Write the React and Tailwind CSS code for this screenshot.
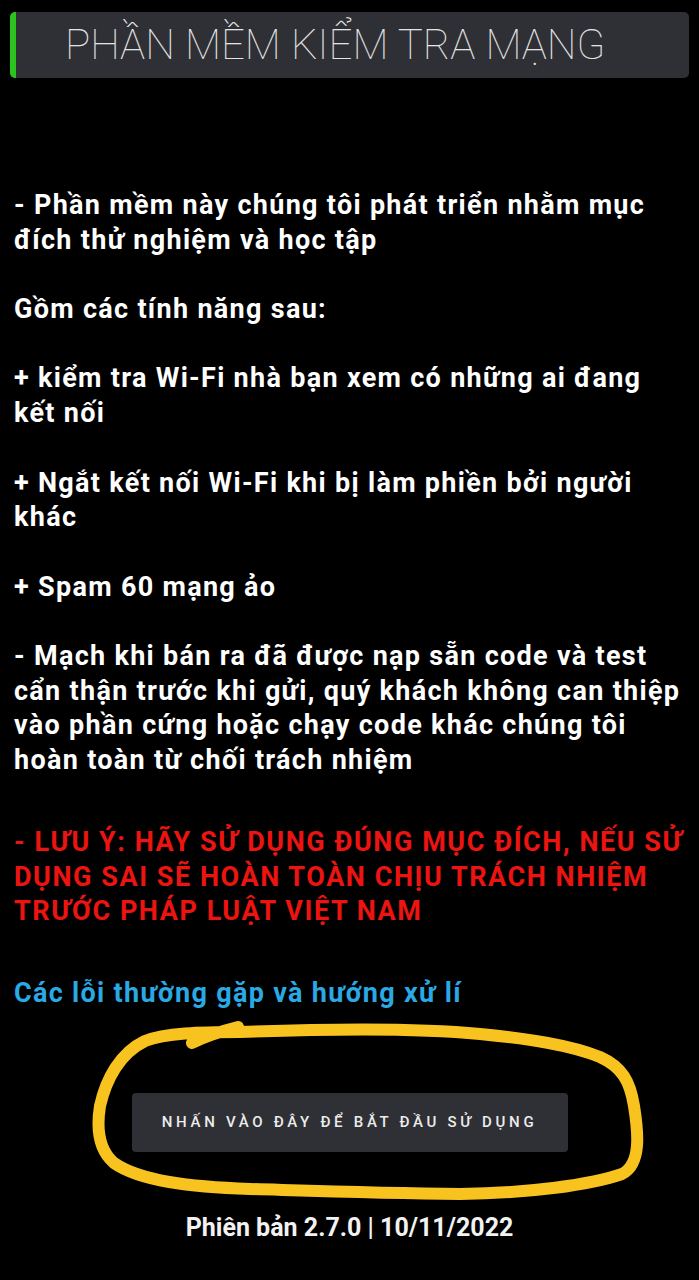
import React from 'react';

const lines = [
  ['- Phần mềm này chúng tôi phát triển nhằm mục', 'đích thử nghiệm và học tập'],
  ['Gồm các tính năng sau:'],
  ['+ kiểm tra Wi-Fi nhà bạn xem có những ai đang', 'kết nối'],
  ['+ Ngắt kết nối Wi-Fi khi bị làm phiền bởi người', 'khác'],
  ['+ Spam 60 mạng ảo'],
  [
    '- Mạch khi bán ra đã được nạp sẵn code và test',
    'cẩn thận trước khi gửi, quý khách không can thiệp',
    'vào phần cứng hoặc chạy code khác chúng tôi',
    'hoàn toàn từ chối trách nhiệm',
  ],
];

const warning = [
  '- LƯU Ý: HÃY SỬ DỤNG ĐÚNG MỤC ĐÍCH, NẾU SỬ',
  'DỤNG SAI SẼ HOÀN TOÀN CHỊU TRÁCH NHIỆM',
  'TRƯỚC PHÁP LUẬT VIỆT NAM',
];

// vòng tròn vẽ tay màu vàng quanh nút
const Scribble = () => (
  <svg
    className="absolute left-0 top-0 pointer-events-none"
    width="699"
    height="200"
    viewBox="0 1010 699 200"
    fill="none"
  >
    <path
      d="M238 1026 C222 1030 204 1036 192 1042
         M240 1031 C200 1031 165 1032 145 1040
         C120 1052 106 1078 100 1105
         C96 1130 100 1150 114 1162
         C140 1180 190 1186 250 1188
         C320 1190 380 1192 460 1193
         C530 1192 590 1184 622 1173
         C642 1163 638 1130 634 1105
         C630 1080 622 1066 600 1056
         C570 1044 530 1038 480 1033
         C420 1027 320 1028 240 1031"
      stroke="#f9c31f"
      strokeWidth="12"
      strokeLinecap="round"
      strokeLinejoin="round"
    />
  </svg>
);

export default function App() {
  return (
    <div
      className="min-h-[1280px] w-full bg-black text-white"
      style={{ fontFamily: 'Roboto, "Noto Sans", sans-serif' }}
    >
      {/* Header */}
      <div className="pt-[12px] px-[10px]">
        <div className="h-[66px] flex items-center bg-[#2f3035] rounded-[5px] border-l-[6px] border-[#2bc41f] pl-[49px]">
          <h1 className="text-[42px] font-thin text-[#e4e4e4] leading-none">
            PHẦN MỀM KIỂM TRA MẠNG
          </h1>
        </div>
      </div>

      {/* Nội dung */}
      <div className="px-[14px] pt-[110px] text-[27px] font-bold leading-[34.7px] tracking-[1.3px]">
        <div className="flex flex-col gap-[34.7px]">
          {lines.map((p, i) => (
            <p key={i}>
              {p.map((l, j) => (
                <span key={j} className="block whitespace-nowrap">{l}</span>
              ))}
            </p>
          ))}
        </div>

        <p className="mt-[47px] text-[#ec1410] tracking-[1.55px]">
          {warning.map((l, j) => (
            <span key={j} className="block whitespace-nowrap">{l}</span>
          ))}
        </p>

        <p className="mt-[47px] text-[#2aa9e4]">
          Các lỗi thường gặp và hướng xử lí
        </p>
      </div>

      {/* Nút */}
      <div className="relative h-[200px] pt-[82px] flex justify-center">
        <Scribble />
        <button className="w-[436px] h-[59px] bg-[#2f3035] rounded-[4px] text-[15px] font-medium tracking-[3.7px] text-[#ececec]">
          NHẤN VÀO ĐÂY ĐỂ BẮT ĐẦU SỬ DỤNG
        </button>
      </div>

      <p className="mt-[2px] text-center text-[25px] leading-[30px] font-bold text-[#f2f2f2]">
        Phiên bản 2.7.0 | 10/11/2022
      </p>
    </div>
  );
}
